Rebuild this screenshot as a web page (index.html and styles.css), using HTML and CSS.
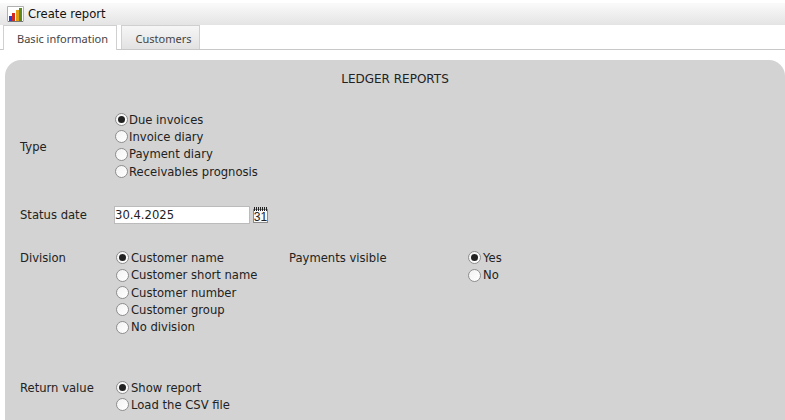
FILE: index.html
```html
<!DOCTYPE html>
<html lang="en">
<head>
    <meta charset="UTF-8">
    <title>Create report</title>
    <link rel="stylesheet" href="styles.css">
</head>
<body>

    <!-- Title bar -->
    <div class="titlebar">
        <svg class="title-icon" width="17" height="16" viewBox="0 0 17 16">
            <path d="M0.5 15.5V0.5H16.5V15.5" fill="#fff" stroke="#b0b0b0"/>
            <rect x="2" y="10" width="3" height="5" fill="#2b3fd0"/>
            <rect x="5" y="7" width="3" height="8" fill="#d42a1e"/>
            <rect x="9" y="4" width="3" height="11" fill="#e0a010"/>
            <rect x="12" y="2" width="3" height="13" fill="#5a8a20"/>
            <rect x="1" y="15" width="15" height="1" fill="#777"/>
        </svg>
        <span>Create report</span>
    </div>

    <!-- Tabs -->
    <div class="tabs">
        <a class="tab active" href="#">Basic information</a>
        <a class="tab" href="#">Customers</a>
    </div>

    <!-- Report form -->
    <div class="panel">
        <h1>LEDGER REPORTS</h1>

        <div class="row row-type">
            <div class="label">Type</div>
            <div class="options">
                <label><span class="radio checked"></span>Due invoices</label>
                <label><span class="radio"></span>Invoice diary</label>
                <label><span class="radio"></span>Payment diary</label>
                <label><span class="radio"></span>Receivables prognosis</label>
            </div>
        </div>

        <div class="row row-date">
            <div class="label">Status date</div>
            <input class="date-input" type="text" value="30.4.2025">
            <svg class="cal" width="15" height="16" viewBox="0 0 15 16">
                <rect x="0.5" y="2.5" width="14" height="13" fill="#fafafa" stroke="#8a8a8a"/>
                <path d="M1.5 0v4M3.5 0v4M5.5 0v4M7.5 0v4M9.5 0v4M11.5 0v4M13.5 0v4" stroke="#222" stroke-width="1"/>
                <text x="7.5" y="14" text-anchor="middle" class="cal-num">31</text>
            </svg>
        </div>

        <div class="row row-division">
            <div class="label label-division">Division</div>
            <div class="options wide">
                <label><span class="radio checked"></span>Customer name</label>
                <label><span class="radio"></span>Customer short name</label>
                <label><span class="radio"></span>Customer number</label>
                <label><span class="radio"></span>Customer group</label>
                <label><span class="radio"></span>No division</label>
            </div>
            <div class="label label-payments label-division">Payments visible</div>
            <div class="options">
                <label><span class="radio checked"></span>Yes</label>
                <label><span class="radio"></span>No</label>
            </div>
        </div>

        <div class="row row-return">
            <div class="label label-division">Return value</div>
            <div class="options wide">
                <label><span class="radio checked"></span>Show report</label>
                <label><span class="radio"></span>Load the CSV file</label>
            </div>
        </div>
    </div>

</body>
</html>
```

FILE: styles.css
```css
* {
    margin: 0;
    padding: 0;
    box-sizing: border-box;
}

html, body {
    height: 420px;
    overflow: hidden;
}

body {
    font-family: "DejaVu Sans", sans-serif;
    font-size: 11.6px;
    color: #222;
    background: #fff;
}

/* Title bar */
.titlebar {
    display: flex;
    align-items: center;
    gap: 4px;
    height: 22px;
    margin-top: 3px;
    padding-left: 7px;
    background: linear-gradient(to bottom, #fafafa, #e4e4e4);
    color: #111;
}

/* Tabs */
.tabs {
    display: flex;
    gap: 4px;
    height: 25px;
    padding-left: 3px;
    border-bottom: 1px solid #c8c8c8;
    font-family: "Noto Sans", sans-serif;
    font-size: 11px;
}

.tab {
    height: 24px;
    padding-top: 5px;
    color: #444;
    text-decoration: none;
    background: linear-gradient(to bottom, #f6f6f6, #e2e2e2);
    border: 1px solid #d0d0d0;
    border-bottom: none;
    text-align: center;
}

.tab.active {
    width: 114px;
    height: 25px;
    padding-left: 5px;
    background: #fff;
}

.tab:last-child {
    width: 79px;
    padding-left: 6px;
}

/* Panel */
.panel {
    height: 360px;
    margin: 10px 0 0 5px;
    padding: 12px 0 0 15px;
    background: #d3d3d3;
    border-radius: 16px 16px 0 0;
}

h1 {
    font-size: 12px;
    font-weight: normal;
    text-align: center;
    color: #222;
    padding-right: 15px;
    line-height: 15px;
}

.row {
    display: flex;
    align-items: flex-start;
}

.label {
    width: 95px;
    flex-shrink: 0;
    line-height: 17px;
}

.label-payments {
    width: 179px;
}

.label-division {
    padding-top: 1px;
}

.options {
    display: flex;
    flex-direction: column;
}

.options label {
    display: flex;
    align-items: center;
    height: 17.33px;
}

.options.wide {
    width: 174px;
}

.options.wide .radio {
    margin-left: 1px;
    margin-right: 2px;
}

.radio {
    width: 13px;
    height: 13px;
    margin-right: 2px;
    background: linear-gradient(to bottom right, #f2f2f2, #fff);
    border: 1px solid #8e8e8e;
    border-radius: 50%;
    flex-shrink: 0;
    display: flex;
    align-items: center;
    justify-content: center;
}

.radio.checked::after {
    content: "";
    width: 7px;
    height: 7px;
    background: #222;
    border-radius: 50%;
}

.row-type {
    margin-top: 24px;
    align-items: center;
}

.row-type .label {
    padding-top: 4px;
}

.row-type .radio {
    margin-right: 1px;
}

.row-date {
    margin-top: 26px;
    align-items: center;
    height: 18px;
}

.date-input {
    width: 136px;
    height: 18px;
    margin-left: -1px;
    padding: 0;
    border: 1px solid #bbb;
    background: #fff;
    font-family: inherit;
    font-size: 11.6px;
    color: #222;
}

.cal {
    margin-left: 3px;
}

.cal-num {
    font-family: "Liberation Sans", sans-serif;
    font-size: 12px;
    fill: #222;
}

.row-division {
    margin-top: 25px;
}

.row-return {
    margin-top: 43px;
}
```
